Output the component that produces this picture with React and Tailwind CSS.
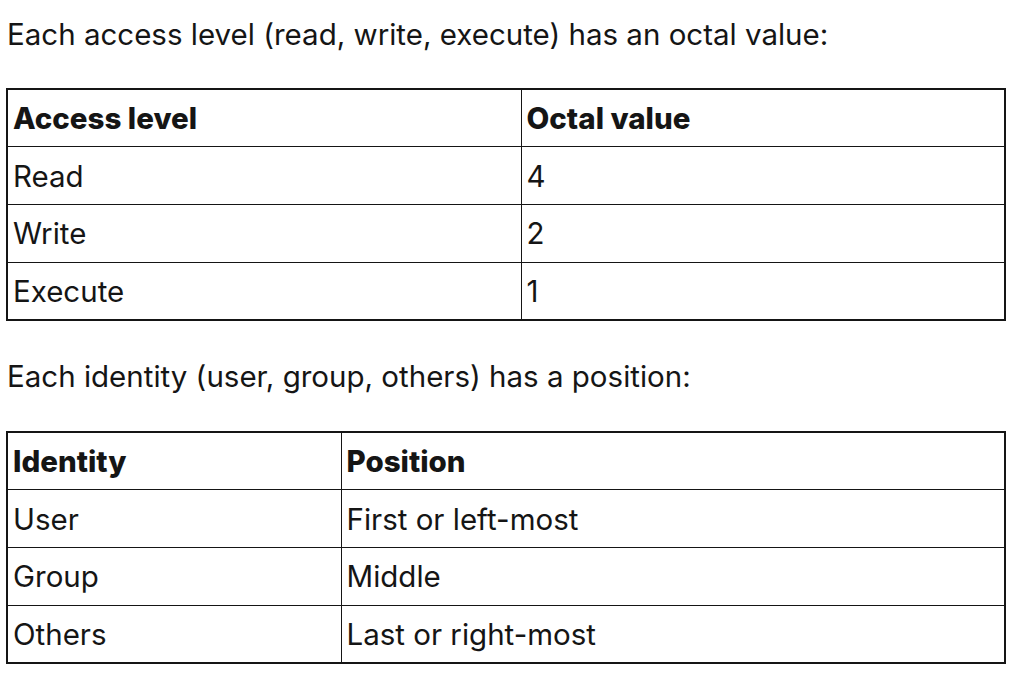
import React from 'react';

const accessRows = [
  ['Read', '4'],
  ['Write', '2'],
  ['Execute', '1'],
];

const identityRows = [
  ['User', 'First or left-most'],
  ['Group', 'Middle'],
  ['Others', 'Last or right-most'],
];

function PermTable({ head, rows, firstCol }) {
  return (
    <table className="w-full border-collapse border-2 border-[#151515] text-[29.5px] leading-[36px]">
      <thead>
        <tr>
          <th className={`${firstCol} h-[57.75px] border border-[#151515] px-[5px] text-left font-extrabold`}>{head[0]}</th>
          <th className="h-[57.75px] border border-[#151515] px-[5px] text-left font-extrabold">{head[1]}</th>
        </tr>
      </thead>
      <tbody>
        {rows.map(([a, b]) => (
          <tr key={a}>
            <td className="h-[57.75px] border border-[#151515] px-[5px]">{a}</td>
            <td className="h-[57.75px] border border-[#151515] px-[5px]">{b}</td>
          </tr>
        ))}
      </tbody>
    </table>
  );
}

export default function App() {
  return (
    <div className="min-h-screen bg-white pl-[6px] pr-[18px] pt-[14px] text-[#151515] font-['Inter',sans-serif]">
      <p className="text-[29.5px] leading-[40px] mb-[34px] pl-[1px]">
        Each access level (read, write, execute) has an octal value:
      </p>
      <PermTable head={['Access level', 'Octal value']} rows={accessRows} firstCol="w-[514px]" />
      <p className="text-[29.5px] leading-[40px] mt-[35px] mb-[35px] pl-[1px]">
        Each identity (user, group, others) has a position:
      </p>
      <PermTable head={['Identity', 'Position']} rows={identityRows} firstCol="w-[334px]" />
    </div>
  );
}
